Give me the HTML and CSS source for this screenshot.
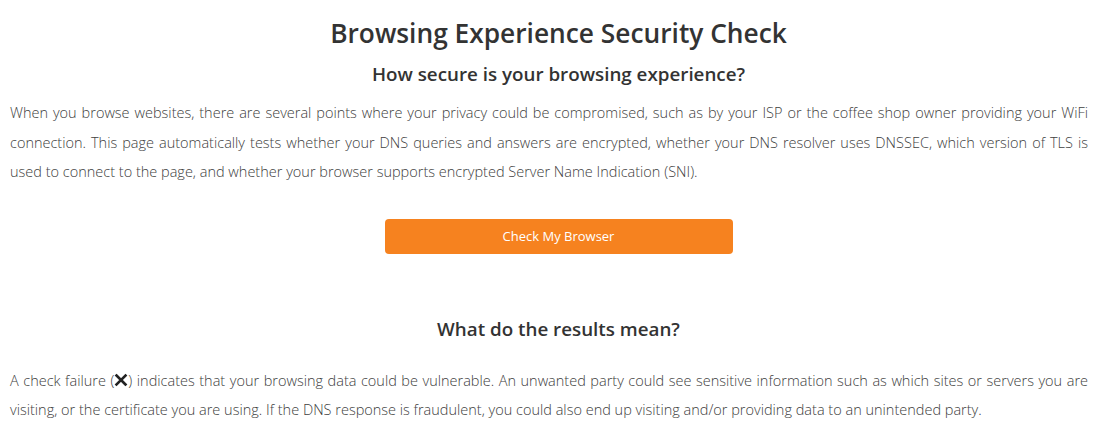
FILE: index.html
```html
<!DOCTYPE html>
<html lang="en">
<head>
<meta charset="UTF-8">
<meta name="viewport" content="width=device-width, initial-scale=1.0">
<title>Browsing Experience Security Check</title>
<link rel="stylesheet" href="styles.css">
</head>
<body>

<div class="container">
    <h1 class="title">Browsing Experience Security Check</h1>
    <h2 class="subtitle">How secure is your browsing experience?</h2>
    <p class="text">When you browse websites, there are several points where your privacy could be compromised, such as by your ISP or the coffee shop owner providing your WiFi connection. This page automatically tests whether your DNS queries and answers are encrypted, whether your DNS resolver uses DNSSEC, which version of TLS is used to connect to the page, and whether your browser supports encrypted Server Name Indication (SNI).</p>

    <div class="actions">
        <button class="check-button" id="checkBrowser">Check My Browser</button>
    </div>

    <h2 class="subtitle results-title">What do the results mean?</h2>
    <p class="text">A check failure (<svg class="fail-icon" viewBox="0 0 14 14" width="14" height="14"><path d="M2.5 2.5 L11.5 11.5 M11.5 2.5 L2.5 11.5" stroke="#222" stroke-width="2.6" stroke-linecap="square"/></svg>) indicates that your browsing data could be vulnerable. An unwanted party could see sensitive information such as which sites or servers you are visiting, or the certificate you are using. If the DNS response is fraudulent, you could also end up visiting and/or providing data to an unintended party.</p>
</div>

</body>
</html>
```

FILE: styles.css
```css
/* Page */
body {
    font-family: "Open Sans", "Noto Sans", sans-serif;
    background-color: #fff;
    color: #404040;
    margin: 0;
    padding: 0;
}

.container {
    padding: 0 10px;
}

.title {
    font-size: 26.3px;
    font-weight: 600;
    color: #333;
    text-align: center;
    margin: 15px 0 0;
    line-height: 36px;
}

.subtitle {
    font-size: 18.8px;
    font-weight: 600;
    color: #333;
    text-align: center;
    margin: 10px 0 0;
    line-height: 26px;
}

.text {
    font-size: 14.5px;
    font-weight: 300;
    line-height: 29.5px;
    text-align: justify;
    margin: 11px 19px 0 0;
}

.fail-icon {
    vertical-align: -1px;
}

.actions {
    display: flex;
    justify-content: center;
    margin-top: 32px;
}

.check-button {
    width: 348px;
    height: 35px;
    border: none;
    border-radius: 4px;
    background-color: #f6821f;
    color: #fff;
    font-family: inherit;
    font-size: 13px;
    cursor: pointer;
}

.results-title {
    margin-top: 62px;
}

.results-title + .text {
    margin-top: 24px;
}
```
